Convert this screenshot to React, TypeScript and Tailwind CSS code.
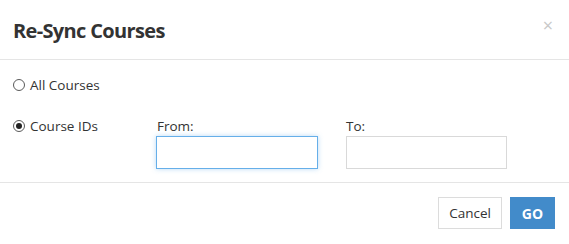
import { useState } from "react";

function Radio({ checked }: { checked: boolean }) {
  return (
    <span className="flex h-[12px] w-[12px] shrink-0 items-center justify-center rounded-full border border-[#5a5a5a] bg-white">
      {checked && <span className="h-[6px] w-[6px] rounded-full bg-[#222]" />}
    </span>
  );
}

export default function App() {
  const [mode, setMode] = useState<"all" | "ids">("ids");

  return (
    <div className="flex h-[244px] w-[569px] flex-col bg-white font-['Open_Sans',sans-serif] text-[#333]">
      {/* header */}
      <div className="flex h-[60px] shrink-0 items-start justify-between border-b border-[#e5e5e5] pl-[13px] pr-[16px] pt-[17px]">
        <h1 className="text-[20px] font-bold leading-[28px] tracking-[-0.65px] text-[#333]">Re-Sync Courses</h1>
        <button className="mt-[-1px] text-[18px] leading-none text-[#c8c8c8]">×</button>
      </div>

      {/* body */}
      <div className="flex h-[123px] shrink-0 flex-col border-b border-[#e5e5e5] pl-[13px] pt-[16px]">
        <label className="flex h-[18px] items-center gap-[5px] text-[13.5px]" onClick={() => setMode("all")}>
          <Radio checked={mode === "all"} />
          <span>All Courses</span>
        </label>

        <div className="mt-[23px] flex items-start">
          <label className="flex h-[18px] w-[143px] items-center gap-[5px] text-[13.5px]" onClick={() => setMode("ids")}>
            <Radio checked={mode === "ids"} />
            <span>Course IDs</span>
          </label>
          <div className="flex flex-col">
            <span className="h-[18px] pl-[1px] text-[13.5px] leading-[18px]">From:</span>
            <input className="mt-[1px] h-[33px] w-[162px] border border-[#66afe9] shadow-[0_0_5px_rgba(102,175,233,0.45)] outline-none" />
          </div>
          <div className="ml-[28px] flex flex-col">
            <span className="h-[18px] text-[13.5px] leading-[18px]">To:</span>
            <input className="mt-[1px] h-[33px] w-[161px] border border-[#d9d9d9] outline-none" />
          </div>
        </div>
      </div>

      {/* footer */}
      <div className="flex flex-1 items-start justify-end gap-[8px] pr-[14px] pt-[14px]">
        <button className="h-[32px] w-[64px] border border-[#dcdcdc] bg-white text-[13.5px] text-[#333]">Cancel</button>
        <button className="h-[32px] w-[45px] bg-[#428bca] text-[14px] font-bold text-white">GO</button>
      </div>
    </div>
  );
}
